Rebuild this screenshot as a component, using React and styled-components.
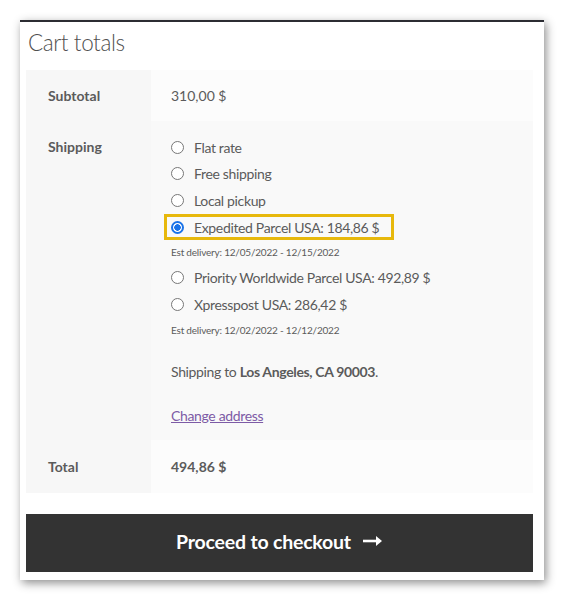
import styled, { createGlobalStyle } from 'styled-components';

const Global = createGlobalStyle`
  html, body {
    margin: 0;
    background: #fff;
  }
  body {
    font-family: Lato, "Open Sans", sans-serif;
    color: #5b5b5b;
  }
`;

const Page = styled.div`
  padding: 20px;
  width: 564px;
  box-sizing: border-box;
`;

const Card = styled.div`
  width: 524px;
  box-sizing: border-box;
  background: #fff;
  border-top: 2px solid #2c2d33;
  box-shadow: 2px 3px 9px rgba(0, 0, 0, 0.45);
  padding: 0 11px 8px 6px;
`;

const Title = styled.h2`
  margin: 0;
  height: 48px;
  line-height: 42px;
  padding-left: 2px;
  font-size: 22.5px;
  font-weight: 300;
  color: #505050;
  letter-spacing: -0.4px;
`;

const Table = styled.div`
  display: grid;
  grid-template-columns: 125px 1fr;
`;

const Label = styled.div`
  background: #f7f7f7;
  padding-left: 22px;
  font-weight: 700;
  font-size: 14px;
  height: ${p => p.$h}px;
  line-height: ${p => p.$lh || p.$h}px;
`;

const Value = styled.div`
  background: ${p => p.$bg || '#fcfcfc'};
  padding-left: 20px;
  font-size: 14px;
  font-weight: ${p => (p.$bold ? 700 : 400)};
  height: ${p => p.$h}px;
  line-height: ${p => p.$h}px;
`;

const ShipCell = styled.div`
  background: #f9f9f9;
  padding: 13px 0 0 20px;
  height: 319px;
  box-sizing: border-box;
  font-size: 14px;
  letter-spacing: -0.35px;
`;

const Options = styled.ul`
  list-style: none;
  margin: 0;
  padding: 0;
`;

const Option = styled.li`
  display: flex;
  align-items: center;
  height: 26.6px;
  width: fit-content;
  box-sizing: border-box;
  margin-left: -7px;
  padding: 0 15px 0 7px;
  font-size: 14px;
  outline: ${p => (p.$highlight ? '3px solid #e7b80c' : 'none')};
  outline-offset: -3px;
`;

const Radio = styled.span`
  width: 11px;
  height: 11px;
  border-radius: 50%;
  border: 1px solid #777;
  background: #fff;
  margin-right: 10px;
  flex: none;
  box-sizing: content-box;

  ${p =>
    p.$checked &&
    `
    border: 2px solid #1a73e8;
    width: 9px;
    height: 9px;
    background: radial-gradient(circle, #1a73e8 0 3px, #fff 3.5px);
  `}
`;

const Est = styled.div`
  font-size: 10px;
  letter-spacing: -0.2px;
  height: 24px;
  line-height: 24px;
`;

const ShipTo = styled.p`
  margin: 19px 0 0;
  line-height: 22px;
  font-size: 14px;
`;

const Change = styled.a`
  display: inline-block;
  margin-top: 22px;
  line-height: 22px;
  font-size: 14px;
  color: #7d5ba6;
  text-decoration: underline;
`;

const Checkout = styled.button`
  margin-top: 21px;
  width: 100%;
  height: 58px;
  padding: 0 0 4px;
  border: none;
  background: #333;
  color: #fff;
  font-family: Lato, sans-serif;
  font-size: 19.5px;
  font-weight: 700;
  display: flex;
  align-items: center;
  justify-content: center;
  gap: 12px;
  letter-spacing: -0.2px;
`;

const options = [
  { label: 'Flat rate' },
  { label: 'Free shipping' },
  { label: 'Local pickup' },
  { label: 'Expedited Parcel USA: 184,86 $', checked: true, est: 'Est delivery: 12/05/2022 - 12/15/2022' },
  { label: 'Priority Worldwide Parcel USA: 492,89 $' },
  { label: 'Xpresspost USA: 286,42 $', est: 'Est delivery: 12/02/2022 - 12/12/2022' },
];

export default function App() {
  return (
    <Page>
      <Global />
      <Card>
        <Title>Cart totals</Title>
        <Table>
          <Label $h={51}>Subtotal</Label>
          <Value $h={51}>310,00 $</Value>

          <Label $h={319} $lh={52}>Shipping</Label>
          <ShipCell>
            <Options>
              {options.map(o => (
                <div key={o.label}>
                  <Option $highlight={o.checked}>
                    <Radio $checked={o.checked} />
                    {o.label}
                  </Option>
                  {o.est && <Est>{o.est}</Est>}
                </div>
              ))}
            </Options>
            <ShipTo>
              Shipping to <strong>Los Angeles, CA 90003</strong>.
            </ShipTo>
            <Change href="#">Change address</Change>
          </ShipCell>

          <Label $h={53}>Total</Label>
          <Value $h={53} $bold>494,86 $</Value>
        </Table>
        <Checkout>
          Proceed to checkout
          <svg width="20" height="12" viewBox="0 0 20 12">
            <path d="M0 6h15" stroke="#fff" strokeWidth="2.6" />
            <path d="M13 1l6 5-6 5z" fill="#fff" />
          </svg>
        </Checkout>
      </Card>
    </Page>
  );
}
